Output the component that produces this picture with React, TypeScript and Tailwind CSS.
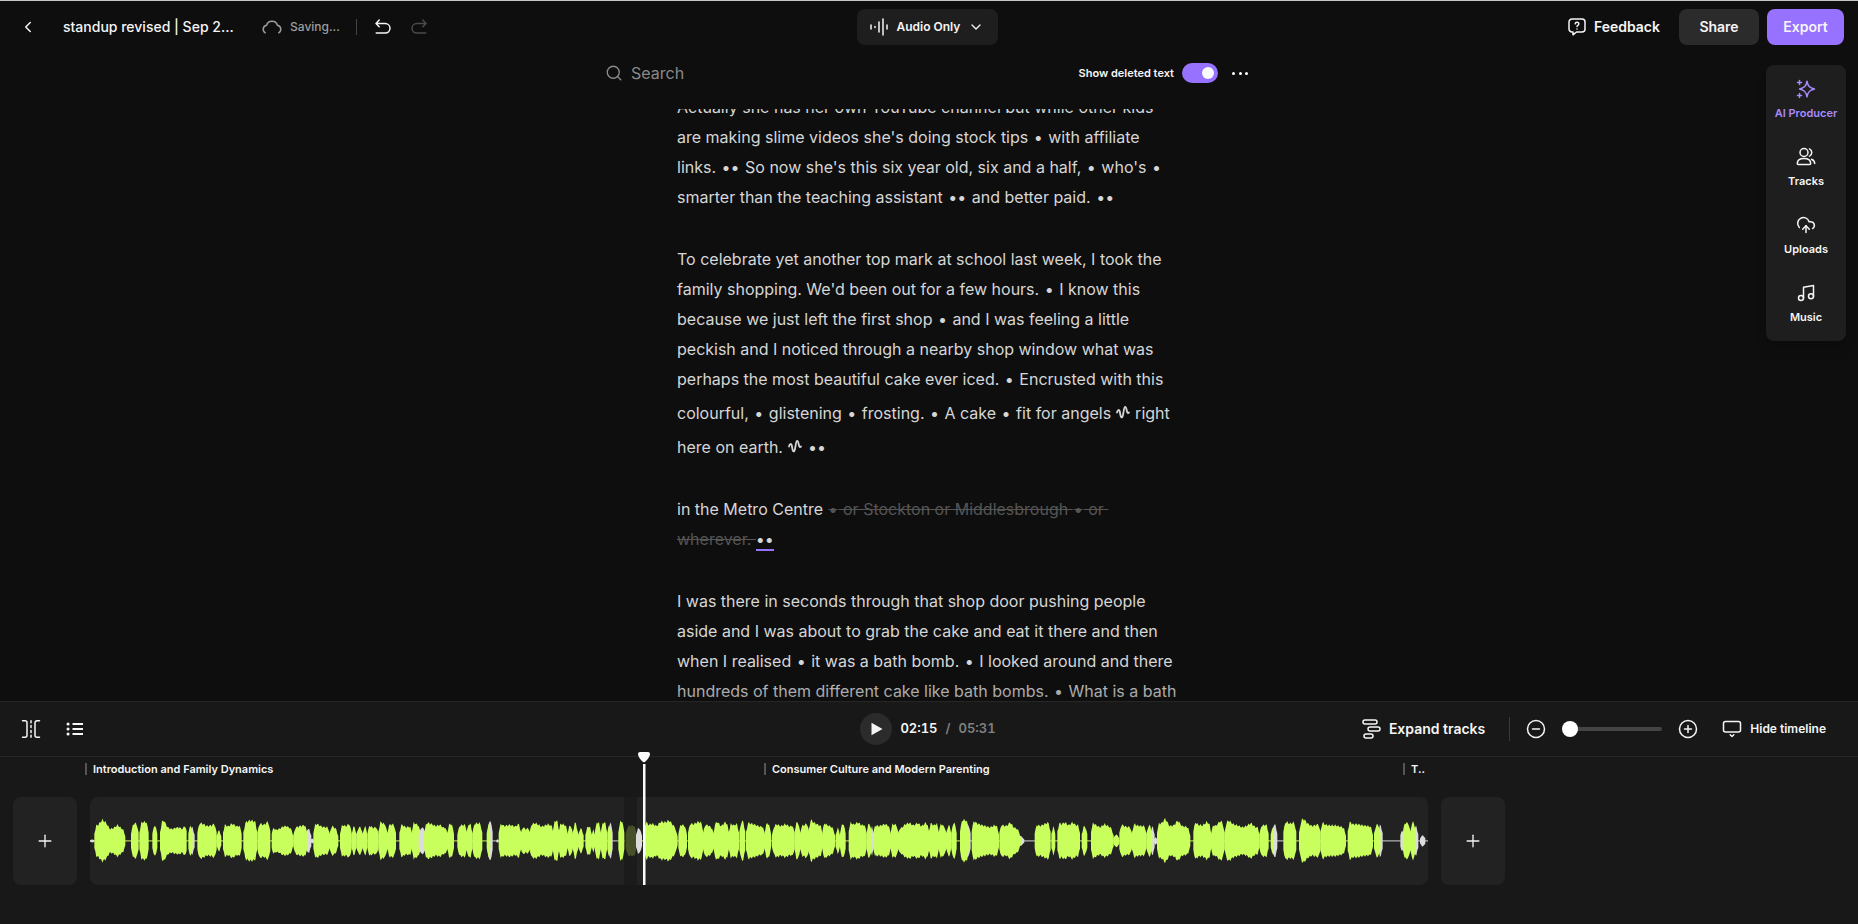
import { Fragment, ReactNode, useState } from 'react';
import { ChevronDown, ChevronLeft, CloudUpload, Music, Plus, Search } from 'lucide-react';

type Tone = 'voice' | 'pause' | 'cut';
type Burst = [number, number, number[], Tone?];

const toneColor: Record<Tone, string> = { voice: '#c9ff5c', pause: '#dcdcdc', cut: '#46512a' };

// start, end, peaks spread evenly between them (three units per pixel)
const bursts: Burst[] = [
  [270, 283, [5], 'pause'],
  [283, 376, [52, 52, 68, 60, 38, 42, 52, 40, 34]],
  [393, 416, [54, 58]],
  [418, 446, [60, 62]],
  [457, 472, [52]],
  [480, 560, [62, 66, 44, 38, 42, 44, 38, 68]],
  [568, 584, [44], 'pause'],
  [565, 578, [54]],
  [592, 650, [60, 56, 48, 50, 60]],
  [649, 664, [34]],
  [669, 725, [60, 46, 56, 46, 54]],
  [730, 772, [58, 66, 62]],
  [772, 811, [58, 52, 68]],
  [815, 881, [54, 36, 38, 46, 48, 42, 30]],
  [915, 934, [38], 'pause'],
  [880, 922, [42, 48, 52]],
  [932, 942, [9], 'pause'],
  [940, 990, [58, 54, 46, 44, 46]],
  [989, 1015, [54, 34]],
  [1020, 1055, [54, 48, 60]],
  [1054, 1070, [46]],
  [1069, 1089, [44]],
  [1088, 1102, [50]],
  [1102, 1136, [54, 42, 46]],
  [1135, 1163, [66, 48]],
  [1161, 1188, [52, 54]],
  [1198, 1237, [58, 44, 48]],
  [1235, 1263, [64, 44]],
  [1256, 1278, [42], 'pause'],
  [1272, 1343, [54, 58, 54, 48, 52, 42, 46]],
  [1341, 1362, [54]],
  [1372, 1402, [48, 54]],
  [1399, 1418, [54]],
  [1417, 1447, [56, 58]],
  [1462, 1478, [66], 'pause'],
  [1460, 1471, [58]],
  [1489, 1496, [7], 'pause'],
  [1496, 1563, [60, 48, 52, 46, 62]],
  [1562, 1592, [50, 38, 44]],
  [1588, 1662, [52, 58, 46, 54, 46]],
  [1658, 1678, [66]],
  [1675, 1704, [58, 48]],
  [1702, 1719, [50]],
  [1718, 1734, [58]],
  [1734, 1751, [40]],
  [1756, 1776, [46]],
  [1774, 1786, [38]],
  [1784, 1803, [60]],
  [1802, 1822, [60]],
  [1824, 1838, [62], 'pause'],
  [1822, 1833, [60]],
  [1855, 1873, [66, 64]],
  [1877, 1910, [48, 50], 'cut'],
  [1908, 1926, [44, 38], 'pause'],
  [1932, 2033, [74, 52, 56, 48, 62, 60, 66, 50, 30]],
  [2035, 2061, [54, 48]],
  [2064, 2111, [58, 54, 62, 56]],
  [2109, 2143, [54, 50, 34]],
  [2139, 2188, [48, 62, 48, 60, 50]],
  [2186, 2217, [60, 50, 60]],
  [2218, 2236, [64]],
  [2238, 2295, [62, 56, 52, 46, 46]],
  [2293, 2313, [56]],
  [2315, 2384, [36, 54, 48, 54, 46, 54]],
  [2383, 2401, [60]],
  [2399, 2428, [46, 58]],
  [2426, 2469, [76, 60, 52, 46]],
  [2467, 2506, [66, 52, 46, 34]],
  [2507, 2520, [44]],
  [2520, 2537, [56]],
  [2546, 2600, [70, 52, 60, 50, 56]],
  [2610, 2622, [50], 'pause'],
  [2599, 2616, [56]],
  [2619, 2673, [52, 48, 54, 46]],
  [2671, 2696, [56, 50]],
  [2692, 2789, [36, 42, 54, 58, 50, 58, 48, 58, 48]],
  [2786, 2817, [64, 50, 62]],
  [2816, 2841, [62, 38]],
  [2838, 2855, [50]],
  [2854, 2870, [60]],
  [2896, 2912, [54], 'pause'],
  [2880, 2907, [70, 64]],
  [2915, 2997, [72, 58, 52, 48, 44, 50, 48]],
  [3054, 3073, [20, 10], 'pause'],
  [2998, 3063, [58, 50, 48, 60, 44, 38, 22]],
  [3104, 3152, [56, 48, 56, 62]],
  [3154, 3166, [50]],
  [3172, 3240, [66, 54, 60, 50, 60, 50, 58]],
  [3245, 3262, [48]],
  [3273, 3341, [66, 52, 44, 54, 46, 36]],
  [3340, 3358, [20]],
  [3358, 3397, [56, 46, 44]],
  [3396, 3440, [60, 50, 48, 48]],
  [3450, 3464, [48], 'pause'],
  [3439, 3457, [50]],
  [3462, 3472, [14], 'pause'],
  [3471, 3571, [62, 56, 72, 48, 50, 66, 48, 46, 38]],
  [3580, 3635, [70, 52, 50, 62, 46]],
  [3633, 3674, [54, 48, 64, 56]],
  [3673, 3779, [54, 66, 54, 50, 44, 48, 58, 44, 46]],
  [3778, 3806, [48, 54]],
  [3815, 3832, [54], 'pause'],
  [3812, 3822, [48]],
  [3850, 3889, [66, 56, 62]],
  [3897, 3962, [58, 72, 56, 48, 52, 56]],
  [3961, 4038, [66, 52, 50, 50, 46, 38]],
  [4043, 4119, [68, 54, 54, 50, 48, 44]],
  [4134, 4148, [54], 'pause'],
  [4122, 4142, [52]],
  [4201, 4212, [40], 'pause'],
  [4240, 4255, [48], 'pause'],
  [4208, 4232, [60, 56]],
  [4230, 4248, [60]],
  [4260, 4276, [18], 'pause'],
];

const silences = [[1838, 1855], [3072, 3104], [3831, 3850], [4148, 4201], [4254, 4284], [1476, 1496]];

function burstPath([start, end, peaks]: Burst) {
  const steps = Math.max(4, Math.round((end - start) / 3));
  const top: string[] = [];
  const bottom: string[] = [];
  for (let i = 0; i <= steps; i++) {
    const t = i / steps;
    const x = start + (end - start) * t;
    const at = t * (peaks.length - 1);
    const low = Math.floor(at);
    const high = Math.min(low + 1, peaks.length - 1);
    const peak = peaks[low] + (peaks[high] - peaks[low]) * (at - low);
    const edge = Math.min(1, 0.45 + Math.min(x - start, end - x) / 12);
    const ripple = 0.93 + 0.07 * Math.sin(x * 0.7);
    const h = peak * edge * ripple;
    top.push(`${x.toFixed(1)} ${(-h).toFixed(1)}`);
    bottom.unshift(`${x.toFixed(1)} ${(h * 0.97).toFixed(1)}`);
  }
  return `M${top.join('L')}L${bottom.join('L')}Z`;
}

const Waveform = () => (
  <svg viewBox="270 -132 4014 264" preserveAspectRatio="none" className="relative h-full w-full" aria-hidden="true">
    <rect x="283" y="-3" width="3970" height="5" fill="#86a443" />
    {silences.map(([from, to]) => (
      <g key={from}>
        <rect x={from} y="-4" width={to - from} height="8" fill="#222222" />
        <rect x={from} y="-3" width={to - from} height="5" fill="#8c8c8c" />
      </g>
    ))}
    <rect x="1873" y="-5" width="36" height="10" fill="#1b1b1b" />
    {bursts.map((burst) => (
      <path key={burst[0]} d={burstPath(burst)} fill={toneColor[burst[3] ?? 'voice']} />
    ))}
  </svg>
);

const stroke = {
  fill: 'none',
  stroke: 'currentColor',
  strokeWidth: 1.5,
  strokeLinecap: 'round' as const,
  strokeLinejoin: 'round' as const,
  'aria-hidden': true,
};

const CloudIcon = () => (
  <svg {...stroke} width="20" height="20" viewBox="0 0 20 20">
    <path d="M3.2 15.8C.2 13.8.6 9 4.6 8.2 6.2 3 13.8 3 15.4 8.2 19.4 9 19.8 13.8 16.8 15.8" />
  </svg>
);

const UndoIcon = () => (
  <svg {...stroke} width="16" height="16" viewBox="0 0 16 16">
    <path d="M4.2 1 1 4.5l3.2 3.2M1 4.5h9.2a4.8 4.8 0 0 1 0 9.6H1.2" />
  </svg>
);

const BarsIcon = () => (
  <svg {...stroke} width="18" height="18" viewBox="0 0 18 18">
    <path d="M1 7v4M5 8.5v1M9 4v10M13 1v16M17 7v4" />
  </svg>
);

const FeedbackIcon = () => (
  <svg {...stroke} width="18" height="18" viewBox="0 0 18 18">
    <path d="M4 1h10a3 3 0 0 1 3 3v7a3 3 0 0 1-3 3H8.5L5 16.8V14H4a3 3 0 0 1-3-3V4a3 3 0 0 1 3-3Z" />
    <path d="M7.2 5.8C7.5 3.6 11 3.8 10.8 6 10.7 7.4 9 7.3 9 8.6M9 10.9v.1" />
  </svg>
);

const SparkleIcon = () => (
  <svg {...stroke} width="20" height="20" viewBox="0 0 20 20">
    <path d="M11 2.2C11.8 7 13.5 8.9 18.5 10 13.5 11 11.8 13 11 17.8 10.2 13 8.5 11 3.5 10 8.5 8.9 10.2 7 11 2.2ZM3.5 1.5v4M1.5 3.5h4M3.5 14.5v4M1.5 16.5h4" />
  </svg>
);

const PeopleIcon = () => (
  <svg {...stroke} width="20" height="20" viewBox="0 0 20 20">
    <circle cx="8" cy="5.5" r="4" />
    <path d="M13.5 1.9a4 4 0 0 1 0 7.2M1.3 16.6c0-3.2 2.9-5 6.7-5s6.7 1.8 6.7 5c0 .6-.4 1-1 1H2.3c-.6 0-1-.4-1-1ZM15.5 12.2c2 .8 3.2 2.5 3.2 4.4" />
  </svg>
);

const SplitIcon = () => (
  <svg {...stroke} width="20" height="20" viewBox="0 0 20 20">
    <path d="M1.5 1.8H4A2 2 0 0 1 6 3.8v12.4a2 2 0 0 1-2 2H1.5M18.5 1.8H16a2 2 0 0 0-2 2v12.4a2 2 0 0 0 2 2h2.5" />
    <path d="M10 1.8v16.4" strokeDasharray="2 2.8" />
  </svg>
);

const ListIcon = () => (
  <svg {...stroke} strokeWidth={2} width="18" height="18" viewBox="0 0 18 18">
    <path d="M6.500 4H17M6.500 9H17M6.500 14H17" strokeLinecap="butt" />
    <path d="M2 4h.1M2 9h.1M2 14h.1" strokeWidth={3} />
  </svg>
);

const TracksIcon = () => (
  <svg {...stroke} width="20" height="20" viewBox="0 0 20 20">
    <rect x="1" y="1" width="14" height="4" rx="2" />
    <rect x="6" y="8" width="12" height="4" rx="2" />
    <rect x="2" y="15" width="9" height="4" rx="2" />
  </svg>
);

const HideIcon = () => (
  <svg {...stroke} width="20" height="20" viewBox="0 0 20 20">
    <rect x="1.5" y="2.5" width="17" height="10.5" rx="2" />
    <path d="m8.2 15.8 1.8 1.7 1.8-1.7" />
  </svg>
);

const ZoomIcon = ({ plus = false }) => (
  <svg {...stroke} width="20" height="20" viewBox="0 0 20 20">
    <circle cx="10" cy="10" r="8.5" />
    <path d={plus ? 'M6.5 10h7M10 6.5v7' : 'M6.5 10h7'} />
  </svg>
);

const Squiggle = () => (
  <svg {...stroke} strokeWidth={1.8} width="14" height="13" viewBox="0 0 14 13" className="mx-[5px] inline-block align-baseline">
    <path d="M1 6.5C1.6 3.5 3.3 3.2 3.8 5.5 4.4 9 4.8 12.4 6.2 11.2 7.8 9 7.4 1 9.2 1 11 1 10.4 9 13 6.5" />
  </svg>
);

// "~" marks a filler sound inside a line
const paragraphs: string[][] = [
  [
    'Actually she has her own YouTube channel but while other kids',
    "are making slime videos she's doing stock tips • with affiliate",
    "links. •• So now she's this six year old, six and a half, • who's •",
    'smarter than the teaching assistant •• and better paid. ••',
  ],
  [
    'To celebrate yet another top mark at school last week, I took the',
    "family shopping. We'd been out for a few hours. • I know this",
    'because we just left the first shop • and I was feeling a little',
    'peckish and I noticed through a nearby shop window what was',
    'perhaps the most beautiful cake ever iced. • Encrusted with this',
    'colourful, • glistening • frosting. • A cake • fit for angels~right',
    'here on earth.~••',
  ],
];

const closing = [
  'I was there in seconds through that shop door pushing people',
  'aside and I was about to grab the cake and eat it there and then',
  'when I realised • it was a bath bomb. • I looked around and there',
  'hundreds of them different cake like bath bombs. • What is a bath',
];

// each run of dots is one pause between words
const withPauses = (text: string): ReactNode =>
  text.split(/(•+)/).map((part, i) => (part.startsWith('•') ? <span key={i} className="px-px">{part}</span> : part));

const Line = ({ text }: { text: string }) => (
  <span className={text.includes('~') ? 'block pt-1' : 'block'}>
    {text.split('~').map((part, i) => (
      <Fragment key={i}>
        {i > 0 && <Squiggle />}
        {withPauses(part)}
      </Fragment>
    ))}
  </span>
);

const tools = [
  { label: 'AI Producer', icon: <SparkleIcon />, active: true },
  { label: 'Tracks', icon: <PeopleIcon /> },
  { label: 'Uploads', icon: <CloudUpload size={20} strokeWidth={1.8} /> },
  { label: 'Music', icon: <Music size={20} strokeWidth={1.8} /> },
];

const chapters = [
  { title: 'Introduction and Family Dynamics', width: 'w-[679px]' },
  { title: 'Consumer Culture and Modern Parenting', width: 'w-[639px]' },
  { title: 'T..', width: 'w-[25px]' },
];

const Header = () => (
  <header className="grid h-[53px] shrink-0 grid-cols-[1fr_auto_1fr] items-center border-t border-[#c4c8c7] pl-2.5 pr-3.5">
    <div className="flex items-center">
      <button aria-label="Back" className="ml-2 flex size-5 items-center justify-center">
        <ChevronLeft size={18} />
      </button>
      <h1 className="ml-[25px] w-[175px] whitespace-nowrap text-sm font-medium">standup revised | Sep 2...</h1>
      <div className="ml-6 flex items-center gap-2 text-xs font-medium text-[#9d9d9d]">
        <CloudIcon />
        Saving...
      </div>
      <div className="ml-4 h-4 w-px bg-[#444444]" />
      <button aria-label="Undo" className="ml-[18px]">
        <UndoIcon />
      </button>
      <button aria-label="Redo" className="ml-5 -scale-x-100 text-[#4a4a4a]">
        <UndoIcon />
      </button>
    </div>
    <button className="flex h-9 w-[141px] items-center rounded-lg bg-[#1e1e1e] pl-[13px] pr-3.5 text-xs font-semibold">
      <BarsIcon />
      <span className="ml-[9px] flex-1 text-left">Audio Only</span>
      <ChevronDown size={16} />
    </button>
    <div className="flex items-center justify-end text-sm font-semibold">
      <button className="mr-[19px] flex items-center gap-2">
        <FeedbackIcon />
        Feedback
      </button>
      <button className="h-9 w-20 rounded-lg bg-[#2b2b2b]">Share</button>
      <button className="ml-2 h-9 w-[77px] rounded-lg bg-[#9771ff]">Export</button>
    </div>
  </header>
);

const Transcript = () => (
  <div className="relative mt-4 min-h-0 flex-1 overflow-hidden">
    <article className="-mt-[17px] flex flex-col gap-8 whitespace-nowrap pl-[73px] text-base leading-[30px] text-[#d6d6d6]">
      {paragraphs.map((lines) => (
        <p key={lines[0]}>
          {lines.map((line) => <Line key={line} text={line} />)}
        </p>
      ))}
      <p>
        <span className="block">
          in the Metro Centre{' '}
          <del className="whitespace-pre text-[#555555]">{withPauses('• or Stockton or Middlesbrough • or ')}</del>
        </span>
        <span className="block">
          <del className="whitespace-pre text-[#555555]">wherever. </del>
          <span className="border-b-2 border-[#9771ff]">••</span>
        </span>
      </p>
      <p>
        {closing.map((line) => <Line key={line} text={line} />)}
      </p>
    </article>
    <div className="pointer-events-none absolute inset-x-0 bottom-0 h-8 bg-linear-to-t from-[#0e0e0e]/30 to-[#0e0e0e]/0" />
  </div>
);

const Editor = () => {
  const [showDeleted, setShowDeleted] = useState(true);
  return (
    <main className="flex min-h-0 flex-1">
      <div className="flex-1" />
      <section className="flex w-[650px] flex-col">
        <div className="flex h-10 shrink-0 items-center pl-px pr-1.5">
          <Search size={18} strokeWidth={1.8} className="text-[#8a8a8a]" />
          <input
            type="text"
            aria-label="Search"
            placeholder="Search"
            className="ml-2 min-w-0 flex-1 bg-transparent text-base outline-none placeholder:text-[#8a8a8a]"
          />
          <label htmlFor="show-deleted" className="text-[11px] font-semibold">Show deleted text</label>
          <span className="relative ml-2 block h-5 w-9">
            <input
              id="show-deleted"
              type="checkbox"
              checked={showDeleted}
              onChange={() => setShowDeleted(!showDeleted)}
              className="peer block h-5 w-9 appearance-none rounded-full bg-[#444444] checked:bg-[#9771ff]"
            />
            <span className="pointer-events-none absolute left-1 top-1 size-3 rounded-full bg-[#fafafa] peer-checked:left-5" />
          </span>
          <button aria-label="More" className="ml-[14px] flex w-4 justify-between">
            <span className="size-[3px] rounded-full bg-white" />
            <span className="size-[3px] rounded-full bg-white" />
            <span className="size-[3px] rounded-full bg-white" />
          </button>
        </div>
        <Transcript />
      </section>
      <div className="flex flex-1 items-start justify-end">
        <nav className="mr-3 mt-3 w-20 rounded-lg bg-[#1e1e1e] py-0.5 shadow-lg">
          {tools.map((tool) => (
            <button
              key={tool.label}
              className={`flex h-[68px] w-full flex-col items-center gap-1.5 pt-3 text-[11px] leading-4 font-semibold ${tool.active ? 'text-[#a88aff]' : ''}`}
            >
              {tool.icon}
              {tool.label}
            </button>
          ))}
        </nav>
      </div>
    </main>
  );
};

const Toolbar = () => (
  <div className="grid h-14 grid-cols-[1fr_auto_1fr] items-center border-y border-[#262626] pl-[18px] pr-5">
    <div className="ml-[3px] flex items-center gap-[25px]">
      <button aria-label="Split"><SplitIcon /></button>
      <button aria-label="Chapters"><ListIcon /></button>
    </div>
    <div className="flex items-center text-[13px] font-semibold tabular-nums">
      <button aria-label="Play" className="flex size-8 items-center justify-center rounded-full bg-[#2b2b2b]">
        <svg width="12" height="14" viewBox="0 0 12 14" fill="currentColor" className="ml-0.5">
          <path d="M.5.8 11.5 7 .5 13.2Z" />
        </svg>
      </button>
      <span className="ml-2">02:15</span>
      <span className="mx-2 text-[#808080]">/</span>
      <span className="text-[#808080]">05:31</span>
    </div>
    <div className="mr-3 flex items-center justify-end font-semibold">
      <button className="flex items-center gap-[7px] text-sm">
        <TracksIcon />
        Expand tracks
      </button>
      <div className="ml-6 h-6 w-px bg-[#3a3a3a]" />
      <button aria-label="Zoom out" className="ml-4"><ZoomIcon /></button>
      <input
        type="range"
        aria-label="Timeline zoom"
        min={0}
        max={100}
        defaultValue={0}
        className="mx-4 h-1 w-[100px] appearance-none rounded-full bg-[#444444] [&::-webkit-slider-thumb]:size-4 [&::-webkit-slider-thumb]:appearance-none [&::-webkit-slider-thumb]:rounded-full [&::-webkit-slider-thumb]:bg-white"
      />
      <button aria-label="Zoom in"><ZoomIcon plus /></button>
      <button className="ml-6 flex items-center gap-2 text-xs">
        <HideIcon />
        Hide timeline
      </button>
    </div>
  </div>
);

const AddClip = ({ label }: { label: string }) => (
  <button aria-label={label} className="flex w-16 shrink-0 items-center justify-center rounded-lg bg-[#222222]">
    <Plus size={20} strokeWidth={1.6} />
  </button>
);

const Timeline = () => (
  <div className="relative overflow-x-clip pt-1.5 pb-[39px]">
    <div className="ml-[85px] flex h-3">
      {chapters.map((chapter) => (
        <div key={chapter.title} className={`flex shrink-0 items-center gap-1.5 ${chapter.width}`}>
          <span className="h-3 w-0.5 bg-[#555555]" />
          <span className="whitespace-nowrap text-[11px] leading-3 font-semibold">{chapter.title}</span>
        </div>
      ))}
    </div>
    <div className="mt-[22px] ml-[13px] flex h-[88px] gap-[13px]">
      <AddClip label="Add clip before" />
      <div className="relative w-[1338px] shrink-0 overflow-hidden rounded-lg bg-[#222222]">
        <div className="absolute inset-y-0 left-[534px] w-[13px] bg-[#1b1b1b]" />
        <Waveform />
      </div>
      <AddClip label="Add clip after" />
    </div>
    <svg width="12" height="134" viewBox="0 0 12 134" fill="#fafafa" className="absolute -top-1.5 left-[638px]">
      <path d="M2 1h8c1.5 0 2 1 2 2 0 3-3.6 6.8-5.2 8-.5.4-1.100.4-1.600 0C3.600 9.800 0 6 0 3 0 2 .5 1 2 1Z" />
      <path d="M5 13h2.500v121H5Z" />
    </svg>
  </div>
);

export default function App() {
  return (
    <div className="flex h-screen flex-col overflow-hidden bg-[#0e0e0e] font-['Inter',sans-serif] text-[#f5f5f5]">
      <Header />
      <Editor />
      <footer className="shrink-0 bg-[#181818]">
        <Toolbar />
        <Timeline />
      </footer>
    </div>
  );
}
